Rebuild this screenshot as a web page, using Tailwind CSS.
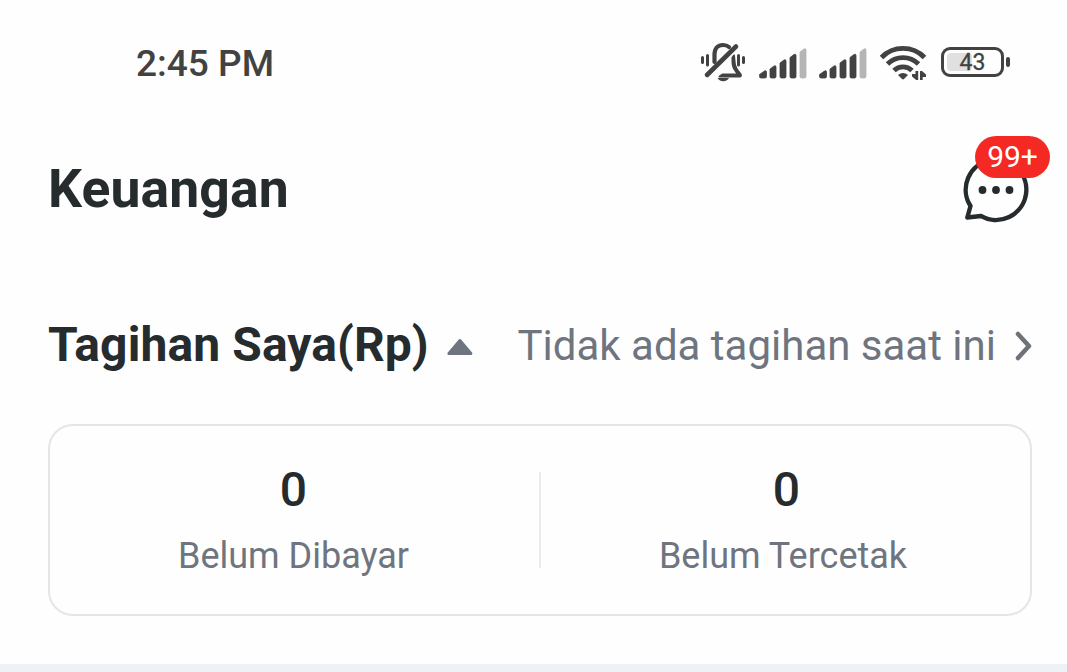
<!DOCTYPE html>
<html lang="id">
<head>
    <meta charset="UTF-8">
    <meta name="viewport" content="width=device-width, initial-scale=1.0">
    <title>Keuangan</title>
    <script src="https://cdn.jsdelivr.net/npm/@tailwindcss/browser@4"></script>
</head>
<body class="bg-[#fefefe] font-['Roboto',sans-serif] text-[#262b2e] overflow-hidden">
    <div class="w-[1067px] h-[672px] flex flex-col overflow-hidden">
        <!-- Status Bar -->
        <div class="h-[126px] shrink-0 flex items-center justify-between pl-[136px] pr-[57px] text-[#424242]">
            <span class="text-[37px] font-medium leading-none whitespace-nowrap">2:45 PM</span>
            <div class="flex items-center">
                <!-- Muted bell -->
                <svg class="w-[50px] h-[44px]" viewBox="698 41 50 44" fill="none" stroke="currentColor" stroke-linecap="round">
                    <path d="M702.5 57.500v5M707.5 55.500v9.500M738.500 55.500v9.500M743.500 57.500v5" stroke-width="3" />
                    <path d="M714.500 62v-7.500c0-6 3.500-9.500 8.500-9.500 2.500 0 4.500.7 6 2" stroke-width="4.200" />
                    <path d="M734 55.500l-1.500 2v4c0 4.500 1 7 3 9.500l2.500 3.500h-15.500l-3 2h20c1.500 0 1.800-1 1-2.500l-3.500-4.500c-2-2.500-2.500-5-2.500-8.500z" fill="currentColor" stroke-width="2" stroke-linejoin="round" />
                    <path d="M707 75l29-28.500" stroke-width="4.600" />
                    <path d="M717.500 78h11.500c-1 2-3 3.200-5.750 3.200s-4.750-1.200-5.750-3.200z" fill="currentColor" stroke="none" />
                </svg>
                <!-- Signal, both SIM cards -->
                <svg class="w-[50px] h-[32px] ml-[10px] mt-[2px]" viewBox="0 0 50 32" fill="currentColor" stroke="currentColor" stroke-width=".8">
                    <path d="M1.500 26.500L6.500 23q2-1 2 1V28.500q0 1.500-1.500 1.500H3Q1.500 30 1.500 28.500zM12 21l4-3q2-1 2 1v9.500q0 1.500-1.500 1.500h-3q-1.500 0-1.500-1.500zM22 15l4-3q2-1 2 1v15.500q0 1.500-1.500 1.500h-3q-1.500 0-1.500-1.500zM32 9.500l4-3q2-1 2 1v21q0 1.500-1.500 1.500h-3q-1.500 0-1.500-1.500z" />
                    <path fill="#b5b5b5" stroke="#b5b5b5" d="M42 4l4-3q2-1 2 1v26.500q0 1.500-1.500 1.500h-3q-1.500 0-1.500-1.500z" />
                </svg>
                <svg class="w-[50px] h-[32px] ml-[10px] mt-[2px]" viewBox="0 0 50 32" fill="currentColor" stroke="currentColor" stroke-width=".8">
                    <path d="M1.500 26.500L6.500 23q2-1 2 1V28.500q0 1.500-1.500 1.500H3Q1.500 30 1.500 28.500zM12 21l4-3q2-1 2 1v9.500q0 1.500-1.500 1.500h-3q-1.500 0-1.500-1.500zM22 15l4-3q2-1 2 1v15.500q0 1.500-1.500 1.500h-3q-1.500 0-1.500-1.500zM32 9.500l4-3q2-1 2 1v21q0 1.500-1.500 1.500h-3q-1.500 0-1.500-1.500z" />
                    <path fill="#b5b5b5" stroke="#b5b5b5" d="M42 4l4-3q2-1 2 1v26.500q0 1.500-1.500 1.500h-3q-1.500 0-1.500-1.500z" />
                </svg>
                <!-- Wifi -->
                <svg class="w-[50px] h-[40px] ml-[10px]" viewBox="878 43 50 40" fill="none" stroke="currentColor" stroke-width="4.900">
                    <path d="M881.500 57.500a30 30 0 0 1 43 0M887.500 64a22 22 0 0 1 31 0M894 70.500a13 13 0 0 1 18 0" />
                    <path d="M898 75q5-4 10 0l-4 4q-1 .8-2 0z" fill="currentColor" stroke="none" />
                    <path d="M915.500 71h2.700v9h-2l-4.200-3.500v-2.500h3.500zM920 80v-9h2l4 3.500v2.500h-3.300v3z" fill="currentColor" stroke="none" />
                </svg>
                <!-- Battery -->
                <div class="ml-[13px] flex items-center gap-[2px] mt-[-2px]">
                    <div class="w-[63px] h-[30px] rounded-[9px] border-[3px] border-[#424242] p-[3px] relative">
                        <div class="w-[25px] h-full rounded-[4px] bg-[#e0e0e0]"></div>
                        <span class="absolute inset-0 pt-[1px] flex items-center justify-center text-[23px] leading-none [-webkit-text-stroke:0.3px_#424242]">43</span>
                    </div>
                    <div class="w-[4px] h-[10px] rounded-[2px] bg-[#424242]"></div>
                </div>
            </div>
        </div>

        <!-- Header -->
        <div class="h-[125px] shrink-0 flex items-center justify-between pl-[48px] pr-[38px]">
            <h1 class="text-[53.5px] font-bold leading-none tracking-[0.1px] pt-[1px] whitespace-nowrap">Keuangan</h1>
            <div class="relative">
                <svg class="w-[68px] h-[68px]" viewBox="961 155 68 68" fill="none" stroke="#262b2e" stroke-width="4.400" stroke-linejoin="round">
                    <path d="M967.300 217.500l3.200-11.500A30.300 30.300 0 1 1 981 216z" />
                    <g fill="#262b2e" stroke="none">
                        <circle cx="982.500" cy="190" r="3.900" />
                        <circle cx="996" cy="190" r="3.900" />
                        <circle cx="1009.500" cy="190" r="3.900" />
                    </g>
                </svg>
                <span class="absolute left-[14px] top-[-19px] w-[75px] h-[42px] rounded-full bg-[#f52923] text-white text-[30px] leading-none flex items-center justify-center">99+</span>
            </div>
        </div>

        <!-- Bills -->
        <div class="h-[173px] shrink-0 flex items-center pt-[14px] pl-[48px]">
            <h2 class="text-[48px] font-bold leading-none tracking-[0.1px] whitespace-nowrap">Tagihan Saya(Rp)</h2>
            <svg class="w-[28px] h-[18px] ml-[17px] mt-[4px] shrink-0" viewBox="446 338 28 18">
                <path d="M459.900 340.500l11 13h-22z" fill="#6f757f" stroke="#6f757f" stroke-width="3" stroke-linejoin="round" />
            </svg>
            <span class="ml-auto pt-[2px] text-[42px] leading-none text-[#6f757f] whitespace-nowrap">Tidak ada tagihan saat ini</span>
            <svg class="w-[20px] h-[32px] ml-[17px] mr-[34px] mt-[2px] shrink-0" viewBox="1013 330 20 32" fill="none" stroke="#6f7278" stroke-width="4.500" stroke-linecap="round" stroke-linejoin="round">
                <path d="M1018 334l11 12-11 12" />
            </svg>
        </div>

        <div class="w-[984px] h-[192px] shrink-0 ml-[48px] rounded-[25px] border-2 border-[#e3e6e8] flex items-center">
            <div class="w-[489px] flex flex-col items-center pr-[2px]">
                <span class="text-[48px] font-medium leading-[56px]">0</span>
                <span class="text-[36px] leading-[42px] mt-[17px] mb-px text-[#6f757f] whitespace-nowrap">Belum Dibayar</span>
            </div>
            <div class="w-[2px] h-[96px] bg-[#e8eaec]"></div>
            <div class="flex-1 flex flex-col items-center">
                <span class="text-[48px] font-medium leading-[56px] pl-[2px]">0</span>
                <span class="text-[36px] leading-[42px] mt-[17px] mb-px pr-[5px] text-[#6f757f] whitespace-nowrap">Belum Tercetak</span>
            </div>
        </div>

        <div class="mt-auto h-[8px] shrink-0 bg-[#eef2f6]"></div>
    </div>
</body>
</html>
